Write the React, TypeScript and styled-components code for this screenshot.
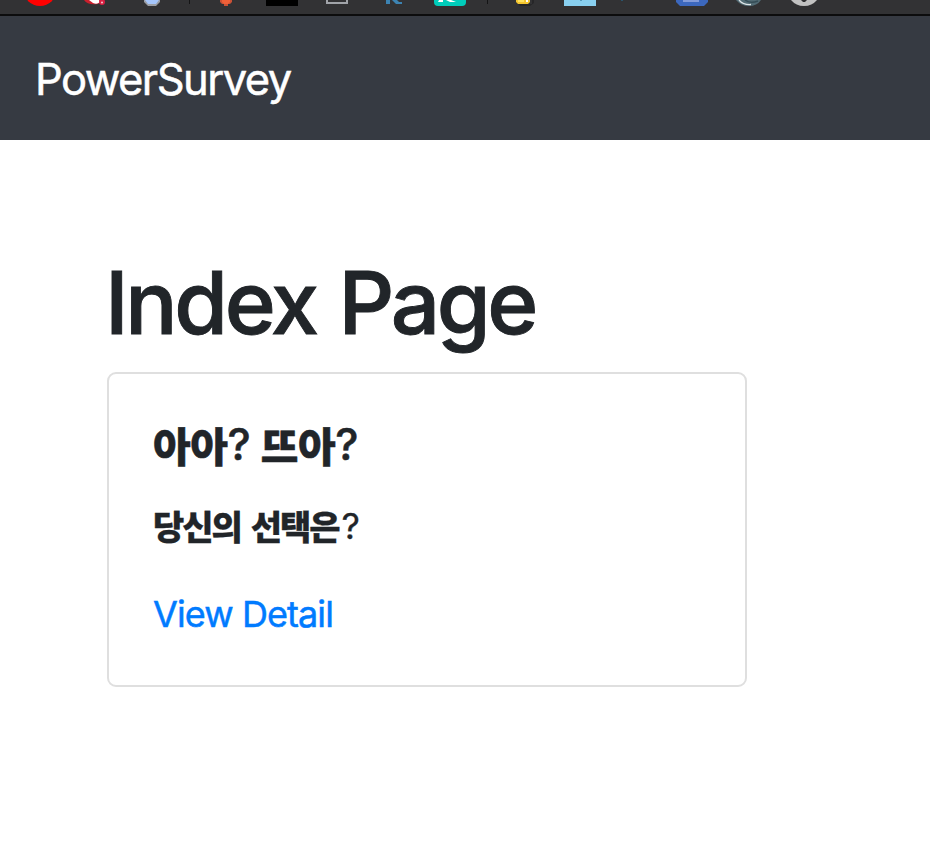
import React from "react";
import styled, { createGlobalStyle } from "styled-components";

const GlobalStyle = createGlobalStyle`
  * { box-sizing: border-box; }
  body { margin: 0; background: #fff; overflow: hidden; }
`;

const Page = styled.div`
  display: flex;
  flex-direction: column;
  height: 856px;
  color: #212529;
  font-family: Inter, "Noto Sans CJK KR", sans-serif;
  background: #fff;
`;

const BookmarkBar = styled.div`
  display: flex;
  flex: none;
  height: 16px;
  background: #323234;
  border-bottom: 2px solid #0c0c0d;
`;

const Bookmark = styled.svg<{ $gap: number }>`
  flex: none;
  display: block;
  height: 14px;
  margin-left: ${(p) => p.$gap}px;
`;

const Navbar = styled.nav`
  display: flex;
  flex: none;
  height: 124px;
  padding: 35px 36px 0 35px;
  background: #363a42;
`;

const Brand = styled.a`
  height: 56px;
  color: #fff;
  font-size: 43.5px;
  line-height: 57px;
  letter-spacing: -1.55px;
  white-space: nowrap;
  -webkit-text-stroke: 0.5px currentColor;
`;

const Main = styled.main`
  padding: 110px 0 0 107px;
`;

const Title = styled.h1`
  margin: 0 0 18px -2px;
  height: 104px;
  font-size: 87px;
  font-weight: 500;
  line-height: 105px;
  letter-spacing: -3.35px;
  word-spacing: 3px;
  white-space: nowrap;
  -webkit-text-stroke: 0.9px currentColor;
`;

const Card = styled.section`
  display: flex;
  flex-direction: column;
  align-items: flex-start;
  width: 640px;
  height: 315px;
  padding: 43px 44px;
  border: 2px solid #dfdfdf;
  border-radius: 9px;
`;

const CardTitle = styled.h5`
  display: flex;
  margin: 0;
  height: 54px;
  font-size: 44px;
  font-weight: 500;
  line-height: 54px;
  letter-spacing: -0.8px;
  white-space: pre;
  -webkit-text-stroke: 0.5px currentColor;
`;

const CardText = styled.p`
  display: flex;
  gap: 3px;
  margin: 28px 0 0;
  height: 54px;
  font-size: 36px;
  line-height: 54px;
  white-space: pre;
  -webkit-text-stroke: 0.3px currentColor;
`;

const Hangul = styled.span<{ $size: number; $spacing: number }>`
  font-family: "Noto Sans CJK KR", sans-serif;
  font-weight: 900;
  font-size: ${(p) => p.$size}px;
  letter-spacing: ${(p) => p.$spacing}px;
  word-spacing: 4px;
`;

const CardLink = styled.a`
  margin-top: 34px;
  height: 54px;
  color: #007bff;
  font-size: 36px;
  line-height: 55px;
  letter-spacing: -0.92px;
  white-space: nowrap;
  -webkit-text-stroke: 0.5px currentColor;
`;

const Bookmarks = () => (
  <BookmarkBar>
    <Bookmark $gap={24} width="32" viewBox="0 0 32 14">
      <circle cx="16" cy="-10.5" r="16.5" fill="#ff0000" />
    </Bookmark>
    <Bookmark $gap={26} width="26" viewBox="0 0 26 14">
      <path d="M2 0C5 4 9 5 16 4L20 0Z" fill="#c91f2c" />
      <path d="M7 0L11 3Q15 5 18 2L17 0Z" fill="#fff" />
      <circle cx="20" cy="2" r="3" fill="#d91f42" />
      <circle cx="20" cy="2.5" r="1" fill="#f4c8d0" />
    </Bookmark>
    <Bookmark $gap={34} width="20" viewBox="0 0 20 14">
      <path d="M2 0H18V2L16 4L14 6H6L4 4L2 2Z" fill="#9a9da3" />
      <path d="M3 0H17L14 4H6Z" fill="#a5c6fc" />
    </Bookmark>
    <Bookmark $gap={27} width="2" viewBox="0 0 2 14">
      <path d="M.5 0V4" stroke="#141415" />
    </Bookmark>
    <Bookmark $gap={27} width="16" viewBox="0 0 16 14">
      <path d="M2 0H14V2L12 4H10V6H6V4H4L2 2Z" fill="#c95035" />
      <path d="M4 0H12V2L10 4H6L4 2Z" fill="#ef6038" />
    </Bookmark>
    <Bookmark $gap={31} width="34" viewBox="0 0 34 14">
      <path d="M1 0H33V6H1Z" fill="#000" />
    </Bookmark>
    <Bookmark $gap={25} width="26" viewBox="0 0 26 14">
      <path d="M3 0V3H23V0" fill="none" stroke="#a1a4a9" strokeWidth="2" />
    </Bookmark>
    <Bookmark $gap={34} width="22" viewBox="0 0 22 14">
      <path d="M2 0H6V4H2ZM8 0H13L15 2H18V4H12Z" fill="#3c83b2" />
    </Bookmark>
    <Bookmark $gap={27} width="34" viewBox="0 0 34 14">
      <path d="M1 0H33V2Q33 6 29 6H5Q1 6 1 2Z" fill="#00cdbb" />
      <path d="M6 0H10V2H5ZM13 0H18L23 2H17Z" fill="#fff" />
    </Bookmark>
    <Bookmark $gap={20} width="2" viewBox="0 0 2 14">
      <path d="M.5 0V4" stroke="#141415" />
    </Bookmark>
    <Bookmark $gap={25} width="20" viewBox="0 0 20 14">
      <path d="M4 4H18V0H20V3L16 6H6Z" fill="#262628" />
      <path d="M2 0H16V2L14 4H4L2 2Z" fill="#f4c52f" />
      <path d="M4 0H10V2H4Z" fill="#ffe35e" />
      <path d="M12 0H14V2H12Z" fill="#fff" />
    </Bookmark>
    <Bookmark $gap={29} width="34" viewBox="0 0 34 14">
      <path d="M1 0H33V6H1Z" fill="#89d0f0" />
      <path d="M17 0H19V1H17Z" fill="#579bbc" />
    </Bookmark>
    <Bookmark $gap={23} width="4" viewBox="0 0 4 14">
      <path d="M1 0H3V1H1Z" fill="#29536b" />
    </Bookmark>
    <Bookmark $gap={51} width="34" viewBox="0 0 34 14">
      <path d="M1 0H33V2L31 4L29 6H5L3 4L1 2Z" fill="#3c68be" />
      <path d="M8 0H24V2H8Z" fill="#829bd9" />
    </Bookmark>
    <Bookmark $gap={25} width="30" viewBox="0 0 30 14">
      <path d="M2 0Q7 6 15 6T27 0Z" fill="#526b74" />
      <path d="M5 0Q9 5 17 4.5" fill="none" stroke="#dde4e6" strokeWidth="1.3" />
      <path d="M11 0Q16 4 24 1" fill="none" stroke="#354c56" strokeWidth="1.5" />
    </Bookmark>
    <Bookmark $gap={26} width="30" viewBox="0 0 30 14">
      <path d="M1 0Q6 6 14 6T27 0Z" fill="#c2c2c2" />
      <path d="M11 0H17L15 2H13Z" fill="#303032" />
    </Bookmark>
  </BookmarkBar>
);

export default function App() {
  return (
    <Page>
      <GlobalStyle />
      <Bookmarks />
      <Navbar>
        <Brand>PowerSurvey</Brand>
      </Navbar>
      <Main>
        <Title>Index Page</Title>
        <Card>
          <CardTitle>
            <Hangul $size={41} $spacing={-0.5}>아아</Hangul>
            <span>? </span>
            <Hangul $size={41} $spacing={-0.5}>뜨아</Hangul>
            <span>?</span>
          </CardTitle>
          <CardText>
            <Hangul $size={34} $spacing={-2}>당신의 선택은</Hangul>
            <span>?</span>
          </CardText>
          <CardLink>View Detail</CardLink>
        </Card>
      </Main>
    </Page>
  );
}
